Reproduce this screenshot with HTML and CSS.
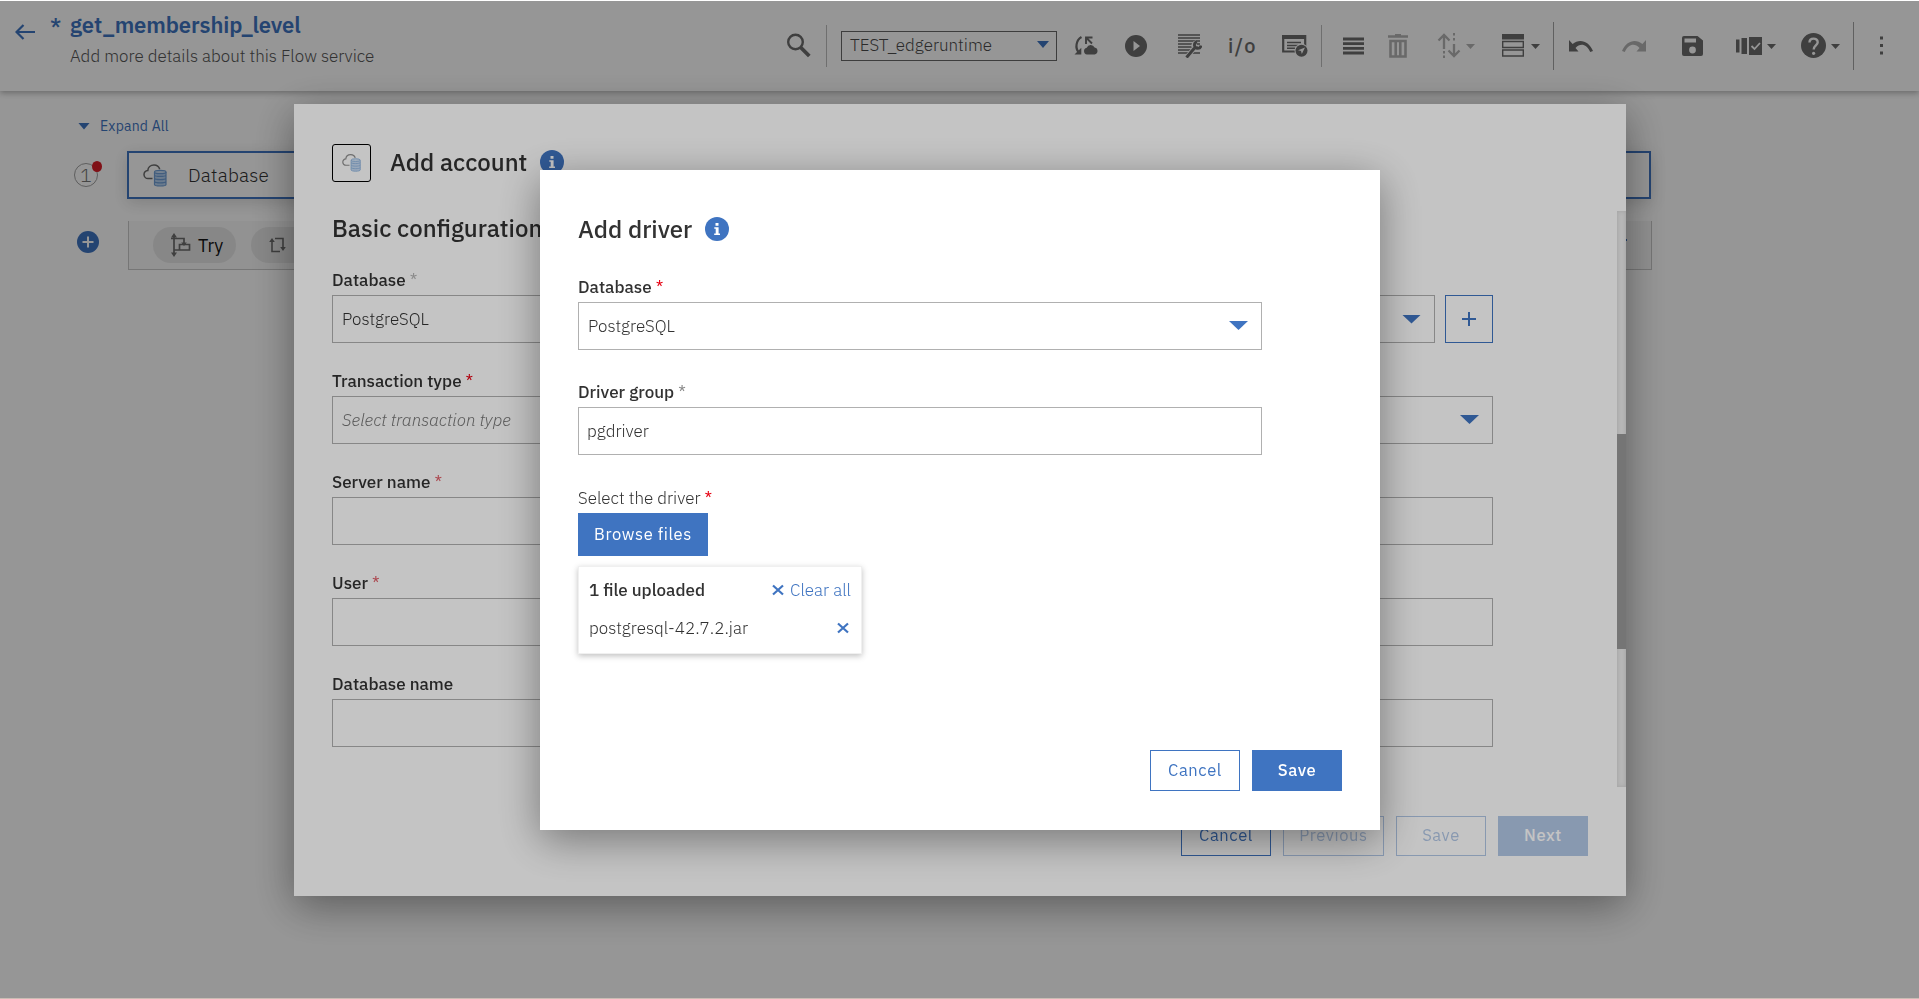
FILE: index.html
```
<!DOCTYPE html>
<html lang="en">
<head>
    <meta charset="UTF-8">
    <meta name="viewport" content="width=device-width, initial-scale=1.0">
    <title>get_membership_level</title>
    <link rel="stylesheet" href="styles.css">
</head>
<body>
    <!-- Shared icons -->
    <svg class="defs">
        <symbol id="cloudDb" viewBox="0 0 24 24">
            <path d="M9.500 15.500H5.200a4 4 0 0 1-.4-8C5 4.500 7.500 2 11 2c3 0 5 1.700 5.700 4.200" fill="none" stroke="#6b6b6b" stroke-width="1.500"/>
            <path d="M11.500 9v12.500c0 .8 2.600 1.500 5.800 1.500s5.700-.7 5.700-1.500V9z" fill="#b5d0f0"/>
            <path d="M11.500 9v12.500c0 .8 2.600 1.500 5.800 1.500s5.700-.7 5.700-1.500V9M11.500 12.200c1 1.600 10.500 1.600 11.500 0M11.500 15.400c1 1.600 10.500 1.600 11.500 0M11.500 18.600c1 1.600 10.500 1.600 11.500 0" fill="none" stroke="#6f9fd6" stroke-width="1.200"/>
            <ellipse cx="17.250" cy="9" rx="5.750" ry="1.700" fill="#c9def5" stroke="#6f9fd6" stroke-width="1.200"/>
        </symbol>
        <symbol id="info" viewBox="0 0 24 24">
            <circle cx="12" cy="12" r="12" fill="#3f74c1"/>
            <path d="M10.500 6h3v2.700h-3zM9.300 10.300h4.300v6.200h1.400V18H9.200v-1.500h1.500v-4.700H9.300z" fill="#fff"/>
        </symbol>
        <symbol id="cross" viewBox="0 0 12 12">
            <path d="M1 1.500l10 9M11 1.500l-10 9" stroke="#3f74c1" stroke-width="2.200" fill="none"/>
        </symbol>
    </svg>

    <header class="topbar">
        <svg class="back" width="20" height="16" viewBox="0 0 20 16"><path d="M20 8H2M8.500 1L1.500 8l7 7" fill="none" stroke="#3f74c1" stroke-width="2.200"/></svg>
        <span class="dirty">*</span>
        <div class="flow">
            <h1>get_membership_level</h1>
            <p>Add more details about this Flow service</p>
        </div>

        <div class="toolbar">
            <svg class="search" width="24" height="25" viewBox="0 0 24 25"><circle cx="8.500" cy="9" r="7.300" fill="none" stroke="#6b6b6b" stroke-width="2.400"/><path d="M13.800 14.500l8.500 8.500" stroke="#6b6b6b" stroke-width="3.800"/></svg>
            <span class="line"></span>
            <div class="runtime"><span>TEST_edgeruntime</span><i class="caret"></i></div>
            <svg class="t-sync" width="24" height="22" viewBox="0 0 24 22"><path d="M7.500 2C2 5 1 13 4.500 17" fill="none" stroke="#6b6b6b" stroke-width="2.200"/><path d="M.5 19.500h6.800v-6.800z" fill="#6b6b6b"/><path d="M12 9V2.500h6.500M12.500 3l5.500 5.500" fill="none" stroke="#6b6b6b" stroke-width="1.900"/><path d="M13 19.500a3.400 3.400 0 0 1-.3-6.700 4.300 4.300 0 0 1 7.900-.2A3.500 3.500 0 0 1 20.600 19.500z" fill="#6b6b6b"/></svg>
            <svg class="t-play" width="22" height="22" viewBox="0 0 22 22"><circle cx="11" cy="11" r="11" fill="#6b6b6b"/><path d="M8.500 6l6.500 5-6.500 5z" fill="#fff"/></svg>
            <svg class="t-doc" width="24" height="24" viewBox="0 0 24 24"><path d="M0 1h22M0 4h22M0 7h22M0 10h22M0 13h20M0 16h16M0 19h22" stroke="#6b6b6b" stroke-width="1.600"/><path d="M8.500 23.500l8-9.500M18.500 8.500a3.400 3.400 0 1 0 4 3.500" fill="none" stroke="#fff" stroke-width="4.800"/><path d="M8.500 23.500l8-9.500" stroke="#6b6b6b" stroke-width="3"/><path d="M19 7.800a3.300 3.300 0 1 0 4 3.700" fill="none" stroke="#6b6b6b" stroke-width="2.800"/></svg>
            <span class="io">i/o</span>
            <svg class="t-win" width="26" height="23" viewBox="0 0 26 23"><path d="M1.200 2h22v15.500h-22z" fill="none" stroke="#6b6b6b" stroke-width="2.200"/><path d="M0 1h24v4H0z" fill="#6b6b6b"/><path d="M5 8.500h14M5 11.500h11M5 14.200h8" stroke="#6b6b6b" stroke-width="1.400"/><circle cx="19.500" cy="16.700" r="7" fill="#fff"/><circle cx="19.500" cy="16.700" r="6" fill="#6b6b6b"/><path d="M23 13.500l-3.200 6.500-.8-3-3-.8z" fill="#fff"/></svg>
            <span class="line"></span>
            <svg class="t-rows" width="21" height="18" viewBox="0 0 21 18"><path d="M0 2h21M0 6.700h21M0 11.400h21M0 16h21" stroke="#6b6b6b" stroke-width="2.800"/></svg>
            <svg class="t-trash" width="20" height="24" viewBox="0 0 20 24"><path d="M0 2.500h20M7 1h6" stroke="#b3b3b3" stroke-width="2.400"/><path d="M2.500 7h15v15.500h-15zM7.700 7v15.500M12.300 7v15.500" fill="none" stroke="#b3b3b3" stroke-width="2.600"/></svg>
            <svg class="t-move" width="24" height="25" viewBox="0 0 24 25"><path d="M7 16V2M1.500 7.500L7 2l5.500 5.500M17 11v11.500M11.500 17.500l5.500 5.500 5.500-5.500" fill="none" stroke="#b3b3b3" stroke-width="2.300"/><path d="M16 0h2v2.500h-2zM16 5h2v2.500h-2zM6 18h2v2.500H6zM6 22.500h2V25H6z" fill="#b3b3b3"/></svg>
            <i class="mini near off"></i>
            <svg class="t-list" width="22" height="23" viewBox="0 0 22 23"><path d="M0 0h22v5.500H0z" fill="#6b6b6b"/><path d="M.7 7.500h20.600v6H.7zM.7 16h20.600v6H.7z" fill="none" stroke="#6b6b6b" stroke-width="1.400"/></svg>
            <i class="mini"></i>
            <span class="line tall"></span>
            <svg class="t-undo" width="24" height="12" viewBox="0 0 24 12"><path d="M0 0v11.500h9.500L6.500 8c5-5.500 11-4 14.700 4l2.800-1C20 1 10.500-2 3.600 4z" fill="#6b6b6b"/></svg>
            <svg class="t-redo" width="24" height="12" viewBox="0 0 24 12"><path d="M24 0v11.500h-9.500L17.500 8c-5-5.500-11-4-14.700 4L0 11C4 1 13.500-2 20.400 4z" fill="#b3b3b3"/></svg>
            <svg class="t-save" width="21" height="20" viewBox="0 0 21 20"><path d="M2 0h13.500L21 4.500V18a2 2 0 0 1-2 2H2a2 2 0 0 1-2-2V2a2 2 0 0 1 2-2z" fill="#6b6b6b"/><path d="M2.500 2.500h11.500v4H2.500z" fill="#fff"/><circle cx="10.500" cy="14" r="3.400" fill="#fff"/></svg>
            <svg class="t-cards" width="26" height="18" viewBox="0 0 26 18"><path d="M0 2.500h3.500v13H0zM5.500 1h5.500v16H5.500zM13 0h13v18H13z" fill="#6b6b6b"/><path d="M15.500 9l3 3 5.500-6" fill="none" stroke="#fff" stroke-width="1.800"/></svg>
            <i class="mini near"></i>
            <svg class="t-help" width="25" height="25" viewBox="0 0 25 25"><circle cx="12.500" cy="12.500" r="12.500" fill="#6b6b6b"/><path d="M8.500 9.500c0-5.200 8.200-5 8.200-.3 0 3.200-4 3.300-4 7.300" fill="none" stroke="#fff" stroke-width="2.400"/><circle cx="12.600" cy="20.300" r="1.600" fill="#fff"/></svg>
            <i class="mini near"></i>
            <span class="line tall"></span>
            <svg class="t-dots" width="3" height="19" viewBox="0 0 3 19"><path d="M0 .5h3v3H0zM0 8h3v3H0zM0 15.500h3v3H0z" fill="#6b6b6b"/></svg>
        </div>
    </header>

    <main class="canvas">
        <div class="expand"><i class="caret"></i>Expand All</div>
        <div class="step">
            <div class="stepNo">1<span class="dot"></span></div>
            <div class="stepBox">
                <svg width="24" height="24"><use href="#cloudDb"/></svg>
                <span>Database</span>
            </div>
        </div>
        <div class="step add">
            <svg class="plus" width="22" height="22" viewBox="0 0 22 22"><circle cx="11" cy="11" r="11" fill="#3f74c1"/><path d="M11 5.500v11M5.500 11h11" stroke="#fff" stroke-width="2"/></svg>
            <div class="suggest">
                <span class="pill"><svg width="20" height="24" viewBox="0 0 20 24"><path d="M3 3v18M0 5.500h13v3.500M3 17h15.500v-5.500H8.500v5.500M13 6v6" fill="none" stroke="#6b6b6b" stroke-width="1.700"/><path d="M3 0l3 4.500H0zM3 24l3-4.500H0zM13 13l-2.800-3.500h5.600z" fill="#6b6b6b"/></svg>Try</span>
                <span class="pill loop"><svg width="17" height="16" viewBox="0 0 17 16"><path d="M3 3v11.500h8M6 1.500h8v10" fill="none" stroke="#6b6b6b" stroke-width="1.600"/><path d="M3 1l2.800 4H.2zM14 14l2.800-4h-5.600z" fill="#6b6b6b"/></svg></span>
                <span class="more"></span>
            </div>
        </div>
    </main>

    <!-- Add account -->
    <div class="overlay">
        <div class="modal account">
            <div class="modalHead">
                <span class="connector"><svg width="19" height="19"><use href="#cloudDb"/></svg></span>
                <h2>Add account</h2>
                <svg width="24" height="24"><use href="#info"/></svg>
            </div>
            <div class="modalBody">
                <div class="form">
                    <h3>Basic configuration</h3>
                    <div class="field">
                        <label>Database <b class="grey">*</b></label>
                        <div class="split">
                            <div class="box select low">PostgreSQL<i class="caret big"></i></div>
                            <button class="addBtn"><svg width="14" height="14" viewBox="0 0 14 14"><path d="M7 0v14M0 7h14" stroke="#3f74c1" stroke-width="2"/></svg></button>
                        </div>
                    </div>
                    <div class="field">
                        <label>Transaction type <b>*</b></label>
                        <div class="box select empty">Select transaction type<i class="caret big"></i></div>
                    </div>
                    <div class="field">
                        <label>Server name <b class="soft">*</b></label>
                        <div class="box"></div>
                    </div>
                    <div class="field">
                        <label>User <b class="soft">*</b></label>
                        <div class="box"></div>
                    </div>
                    <div class="field">
                        <label>Database name</label>
                        <div class="box"></div>
                    </div>
                </div>
                <div class="track"><div class="thumb"></div></div>
            </div>
            <div class="modalFoot">
                <button class="btn">Cancel</button>
                <button class="btn wide off">Previous</button>
                <button class="btn off">Save</button>
                <button class="btn primary off">Next</button>
            </div>
        </div>
    </div>

    <!-- Add driver -->
    <div class="overlay">
        <div class="modal driver">
            <div class="modalHead">
                <h2>Add driver</h2>
                <svg width="24" height="24"><use href="#info"/></svg>
            </div>
            <div class="field">
                <label>Database <b>*</b></label>
                <div class="box select">PostgreSQL<i class="caret big"></i></div>
            </div>
            <div class="field">
                <label>Driver group <b class="grey dark">*</b></label>
                <div class="box input">pgdriver</div>
            </div>
            <div class="field upload">
                <label class="light">Select the driver <b>*</b></label>
                <button class="btn primary browse">Browse files</button>
                <div class="files">
                    <div class="fileRow"><strong>1 file uploaded</strong><a><svg width="12" height="12"><use href="#cross"/></svg>Clear all</a></div>
                    <div class="fileRow"><span>postgresql-42.7.2.jar</span><svg class="del" width="12" height="12"><use href="#cross"/></svg></div>
                </div>
            </div>
            <div class="modalFoot">
                <button class="btn">Cancel</button>
                <button class="btn primary">Save</button>
            </div>
        </div>
    </div>
</body>
</html>
```
FILE: styles.css
```
:root {
    --blue: #3f74c1;
    --text: #323232;
    --icon: #6b6b6b;
    --line: #b0b0b0;
}
* {
    margin: 0;
    padding: 0;
    box-sizing: border-box;
}
body {
    font-family: "IBM Plex Sans", Roboto, sans-serif;
    font-size: 17px;
    font-weight: 300;
    color: var(--text);
    background-color: #ffffff;
    height: 999px;
    border-bottom: 1px solid #cbbdb5;
    overflow: hidden;
}
.defs {
    display: none;
}
svg {
    display: block;
    flex: none;
}

/* Top bar */
.topbar {
    display: flex;
    align-items: flex-start;
    height: 91px;
    padding-left: 15px;
    background-color: #ffffff;
    box-shadow: 0 2px 6px rgba(0,0,0,0.3);
}
.back {
    margin-top: 24px;
}
.dirty {
    width: 35px;
    padding-left: 15px;
    margin-top: 12px;
    font-size: 22px;
    font-weight: 500;
    color: var(--blue);
}
.flow h1 {
    margin-top: 10px;
    font-size: 22px;
    line-height: 30px;
    font-weight: 600;
    letter-spacing: -0.1px;
    color: var(--blue);
}
.flow p {
    margin-top: 5px;
    line-height: 23px;
    color: #555555;
}
.toolbar {
    display: flex;
    align-items: center;
    height: 91px;
    margin-left: auto;
    width: 1132px;
}
.line {
    flex: none;
    width: 1px;
    height: 42px;
    background-color: #bdbdbd;
}
.line.tall {
    height: 48px;
    background-color: #a5a5a5;
}
.runtime {
    display: flex;
    align-items: center;
    justify-content: space-between;
    width: 216px;
    height: 30px;
    margin-left: 14px;
    padding: 0 7px 2px 8px;
    border: 1px solid #696969;
    color: #4a4a4a;
}
.caret {
    flex: none;
    width: 12px;
    height: 7px;
    background-color: var(--blue);
    clip-path: polygon(0 0, 100% 0, 50% 100%);
}
.caret.big {
    width: 19px;
    height: 9px;
}
.mini {
    flex: none;
    width: 9px;
    height: 5px;
    margin: 2px 0 0 7px;
    background-color: var(--icon);
    clip-path: polygon(0 0, 100% 0, 50% 100%);
}
.mini.near {
    margin-left: 5px;
}
.mini.off {
    background-color: #b3b3b3;
}
.search + .line { margin-left: 15px; }
.t-sync { margin-left: 17px; }
.t-play { margin-left: 27px; }
.t-doc { margin-left: 31px; }
.io {
    width: 54px;
    margin-left: 26px;
    font-size: 20px;
    font-weight: 500;
    letter-spacing: 1.5px;
    color: var(--icon);
}
.t-win + .line { margin-left: 13px; }
.t-rows { margin-left: 21px; }
.t-trash { margin-left: 24px; }
.t-move { margin-left: 29px; }
.t-list { margin-left: 27px; }
.mini + .line { margin-left: 13px; }
.t-undo { margin-left: 15px; }
.t-redo { margin-left: 29px; }
.t-save { margin-left: 36px; }
.t-cards { margin-left: 33px; }
.t-help { margin-left: 25px; }
.t-dots { margin-left: 26px; }

/* Flow steps */
.canvas {
    padding: 25px 0 0 74px;
}
.expand {
    display: flex;
    align-items: center;
    gap: 10px;
    height: 20px;
    padding-left: 4px;
    font-size: 14px;
    font-weight: 400;
    letter-spacing: 0.2px;
    color: var(--blue);
}
.step {
    display: flex;
    align-items: center;
    width: 1577px;
    margin-top: 15px;
}
.stepNo {
    position: relative;
    width: 24px;
    height: 24px;
    border: 1px solid #a0a0a0;
    border-radius: 50%;
    font-size: 19px;
    line-height: 22px;
    text-align: center;
    color: #777777;
}
.dot {
    position: absolute;
    top: -3px;
    right: -5px;
    width: 10px;
    height: 11px;
    border-radius: 50%;
    background-color: #da1e28;
}
.stepBox {
    display: flex;
    align-items: center;
    flex: 1;
    gap: 21px;
    height: 48px;
    margin-left: 29px;
    padding-left: 14px;
    border: 2px solid var(--blue);
    box-shadow: 0 4px 16px rgba(0,0,0,0.15);
    font-size: 19px;
    letter-spacing: 0.2px;
}
.step.add {
    width: 1578px;
    margin-top: 22px;
    align-items: flex-start;
}
.plus {
    margin: 10px 0 0 3px;
}
.suggest {
    display: flex;
    align-items: center;
    flex: 1;
    gap: 15px;
    height: 49px;
    margin-left: 29px;
    padding-left: 24px;
    border: 1px solid #c9c9c9;
    border-top: 0;
    background-color: #f7f7f7;
}
.pill {
    display: flex;
    align-items: center;
    gap: 7px;
    width: 83px;
    height: 36px;
    padding-left: 18px;
    border-radius: 18px;
    background-color: #e6e6e6;
    font-size: 18px;
    font-weight: 400;
    color: #111111;
}
.more {
    width: 13px;
    height: 2px;
    margin: -10px 24px 0 auto;
    background-color: var(--blue);
}

/* Modals */
.overlay {
    position: fixed;
    inset: 1px 0 1px 0;
    display: flex;
    align-items: center;
    justify-content: center;
    padding-left: 1px;
    background-color: rgba(0,0,0,0.232);
}
.modal {
    display: flex;
    flex-direction: column;
    flex: none;
    background-color: #ffffff;
    box-shadow: 0 10px 40px rgba(0,0,0,0.4);
}
.account {
    width: 1332px;
    height: 792px;
}
.driver {
    width: 840px;
    height: 660px;
    padding: 42px 38px 39px;
}
.modalHead {
    display: flex;
    align-items: center;
    gap: 13px;
}
h2, h3 {
    font-size: 24px;
    line-height: 34px;
    font-weight: 500;
}
.account .modalHead {
    height: 107px;
    align-items: flex-start;
    padding: 40px 38px 0;
}
.connector {
    display: flex;
    align-items: center;
    justify-content: center;
    width: 39px;
    height: 38px;
    border: 1px solid #000000;
    border-radius: 3px;
}
.connector svg {
    opacity: 0.75;
}
.account h2 {
    margin: 1px 0 0 6px;
}
.account h2 + svg {
    margin-top: 6px;
}
.modalBody {
    display: flex;
    height: 576px;
}
.form {
    flex: 1;
    padding: 0 124px 0 38px;
}
h3 {
    margin-bottom: 24px;
}
.field {
    margin-bottom: 27px;
}
label {
    display: block;
    margin-bottom: 4px;
    line-height: 22px;
    font-weight: 500;
}
label b {
    font-weight: 400;
    color: #e60012;
}
label b.grey { color: #b5b5b5; }
label b.dark { color: #8a8a8a; }
label b.soft { color: #e0606a; }
label.light { font-weight: 300; }
.box {
    display: flex;
    align-items: center;
    justify-content: space-between;
    flex: 1;
    height: 48px;
    padding: 0 13px 0 9px;
    border: 1px solid var(--line);
}
.low { padding-top: 1px; }
.input { padding-left: 8px; }
.empty {
    font-style: italic;
    color: #777777;
}
.split {
    display: flex;
    gap: 10px;
}
.addBtn {
    display: flex;
    align-items: center;
    justify-content: center;
    width: 48px;
    height: 48px;
    border: 1px solid var(--blue);
    background: none;
}
.track {
    width: 9px;
    background-color: #eeeeee;
    box-shadow: inset 0 0 4px rgba(0,0,0,0.12);
}
.thumb {
    height: 215px;
    margin-top: 223px;
    background-color: #999999;
}
.modalFoot {
    display: flex;
    justify-content: flex-end;
    gap: 12px;
    margin-top: auto;
}
.account .modalFoot {
    margin-top: 29px;
    padding-right: 38px;
}
.btn {
    width: 90px;
    height: 40px;
    padding-bottom: 2px;
    border: 1px solid var(--blue);
    background-color: transparent;
    color: var(--blue);
    font-family: inherit;
    font-size: 16.5px;
    font-weight: 400;
    letter-spacing: 0.6px;
}
.driver .btn {
    height: 41px;
    padding-bottom: 1px;
}
.btn.wide {
    width: 101px;
}
.btn.primary {
    background-color: var(--blue);
    color: #ffffff;
    font-weight: 500;
}
.btn.off {
    opacity: 0.4;
}

/* Driver form */
.driver .modalHead {
    margin-bottom: 29px;
}
.driver .field {
    width: 684px;
    margin-bottom: 31px;
}
.driver .modalHead + .field {
    margin-top: 1px;
}
.driver .upload {
    margin: 1px 0 0;
}
.driver .browse {
    display: block;
    width: 130px;
    height: 43px;
    font-weight: 400;
}
.files {
    width: 284px;
    height: 88px;
    margin-top: 10px;
    padding: 12px 10px 0;
    border: 1px solid #f0f0f0;
    box-shadow: 0 2px 6px rgba(0,0,0,0.25);
}
.fileRow {
    display: flex;
    align-items: center;
    justify-content: space-between;
    height: 22px;
    margin-bottom: 16px;
}
.fileRow strong { font-weight: 500; }
.fileRow a {
    display: flex;
    align-items: center;
    gap: 6px;
    color: var(--blue);
}
.del { margin-right: 2px; }
```
